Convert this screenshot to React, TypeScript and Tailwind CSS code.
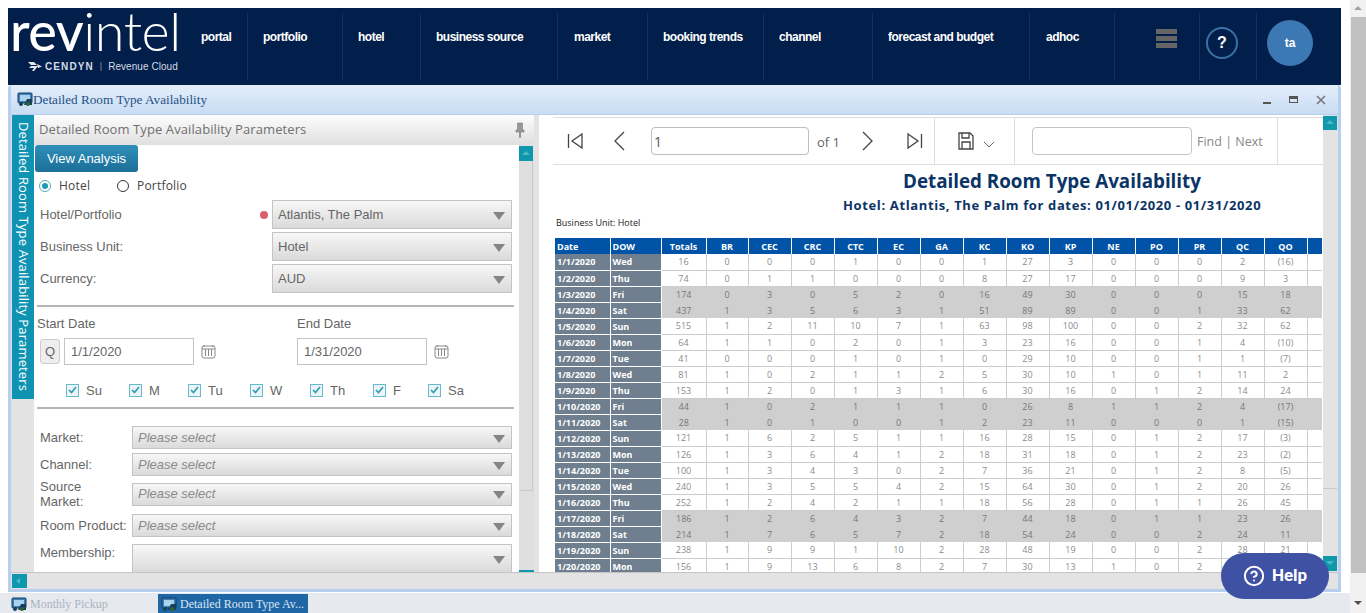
import { CircleHelp } from "lucide-react";

const navItems = [
  { label: "portal", width: "w-[55px]", pad: "pl-[8px]" },
  { label: "portfolio", width: "w-[95px]", pad: "pl-[15px]" },
  { label: "hotel", width: "w-[78px]", pad: "pl-[15px]" },
  { label: "business source", width: "w-[137px]", pad: "pl-[15px]" },
  { label: "market", width: "w-[90px]", pad: "pl-[16px]" },
  { label: "booking trends", width: "w-[116px]", pad: "pl-[15px]" },
  { label: "channel", width: "w-[109px]", pad: "pl-[15px]" },
  { label: "forecast and budget", width: "w-[157px]", pad: "pl-[15px]" },
  { label: "adhoc", width: "w-[85px]", pad: "pl-[16px]" },
];

const columns = ["BR", "CEC", "CRC", "CTC", "EC", "GA", "KC", "KO", "KP", "NE", "PO", "PR", "QC", "QO"];

const rows = [
  "1/1/2020 Wed 16 0 0 0 1 0 0 1 27 3 0 0 0 2 (16)",
  "1/2/2020 Thu 74 0 1 1 0 0 0 8 27 17 0 0 0 9 3",
  "1/3/2020 Fri 174 0 3 0 5 2 0 16 49 30 0 0 0 15 18",
  "1/4/2020 Sat 437 1 3 5 6 3 1 51 89 89 0 0 1 33 62",
  "1/5/2020 Sun 515 1 2 11 10 7 1 63 98 100 0 0 2 32 62",
  "1/6/2020 Mon 64 1 1 0 2 0 1 3 23 16 0 0 1 4 (10)",
  "1/7/2020 Tue 41 0 0 0 1 0 1 0 29 10 0 0 1 1 (7)",
  "1/8/2020 Wed 81 1 0 2 1 1 2 5 30 10 1 0 1 11 2",
  "1/9/2020 Thu 153 1 2 0 1 3 1 6 30 16 0 1 2 14 24",
  "1/10/2020 Fri 44 1 0 2 1 1 1 0 26 8 1 1 2 4 (17)",
  "1/11/2020 Sat 28 1 0 1 0 0 1 2 23 11 0 0 0 1 (15)",
  "1/12/2020 Sun 121 1 6 2 5 1 1 16 28 15 0 1 2 17 (3)",
  "1/13/2020 Mon 126 1 3 6 4 1 2 18 31 18 0 1 2 23 (2)",
  "1/14/2020 Tue 100 1 3 4 3 0 2 7 36 21 0 1 2 8 (5)",
  "1/15/2020 Wed 240 1 3 5 5 4 2 15 64 30 0 1 2 20 26",
  "1/16/2020 Thu 252 1 2 4 2 1 1 18 56 28 0 1 1 26 45",
  "1/17/2020 Fri 186 1 2 6 4 3 2 7 44 18 0 1 1 23 26",
  "1/18/2020 Sat 214 1 7 6 5 7 2 18 54 24 0 0 2 24 11",
  "1/19/2020 Sun 238 1 9 9 1 10 2 28 48 19 0 0 2 28 21",
  "1/20/2020 Mon 156 1 9 13 6 8 2 7 30 13 1 0 2 24 9",
].map((row) => row.split(" "));

const days = [
  { label: "Su", width: "w-[63px]" },
  { label: "M", width: "w-[59px]" },
  { label: "Tu", width: "w-[62px]" },
  { label: "W", width: "w-[60px]" },
  { label: "Th", width: "w-[63px]" },
  { label: "F", width: "w-[55px]" },
  { label: "Sa", width: "w-[50px]" },
];

const extraFilters = [
  { label: "Market:", text: "Please select", height: "h-[23px]", gap: "mt-[17px] items-center" },
  { label: "Channel:", text: "Please select", height: "h-[23px]", gap: "mt-[4px] items-center" },
  { label: "Source\nMarket:", text: "Please select", height: "h-[23px]", gap: "mt-[3px] items-center" },
  { label: "Room Product:", text: "Please select", height: "h-[23px]", gap: "mt-[5px] items-center" },
  { label: "Membership:", text: "", height: "h-[29px]", gap: "mt-[7px] items-start" },
];

function Caret() {
  return (
    <svg width="12" height="8" viewBox="0 0 12 8" className="mt-[2px] shrink-0">
      <polygon points="0,0 12,0 6,8" fill="#858585" />
    </svg>
  );
}

function Select({ text, italic, className }: { text: string; italic?: boolean; className: string }) {
  return (
    <div
      className={`flex items-center justify-between border border-[#c4c4c4] bg-gradient-to-b from-[#f7f7f7] to-[#dadada] pl-[5px] pr-[6px] text-[13px] ${italic ? "italic text-[#8a8a8a]" : "text-[#666]"} ${className}`}
    >
      <span>{text}</span>
      <Caret />
    </div>
  );
}

function WindowIcon({ className }: { className?: string }) {
  return (
    <svg width="16" height="14" viewBox="0 0 16 14" className={className}>
      <rect x="1" y="1" width="14" height="10" rx="1" fill="#3f7fb5" stroke="#123a63" />
      <rect x="3" y="3" width="10" height="6" fill="#a9d2ee" />
      <path d="M7 13 L10 7 L15 7 L15 13 Z" fill="#1c3e5e" />
      <circle cx="4" cy="12" r="2" fill="#1c3e5e" />
      <circle cx="11" cy="12" r="2" fill="#2a6a2e" />
    </svg>
  );
}

function CalendarIcon() {
  return (
    <svg width="15" height="15" viewBox="0 0 15 15" fill="none" stroke="#888">
      <rect x="1" y="2" width="13" height="12" rx="2" />
      <path d="M1 5H14M4.5 5V12M7.5 5V12M10.5 5V12M3 1V3M12 1V3" />
    </svg>
  );
}

function CheckBox() {
  return (
    <span className="flex h-[13px] w-[13px] shrink-0 items-center justify-center border border-[#62bccb] bg-[#edf3f7]">
      <svg width="9" height="8" viewBox="0 0 9 8" fill="none" stroke="#2a9db3" strokeWidth="1.6">
        <path d="M1 4 L3.5 6.5 L8 1" />
      </svg>
    </span>
  );
}

function TealButton({ className, dir }: { className: string; dir?: "up" | "down" | "left" }) {
  const points = dir === "up" ? "1,5 5,1 9,5" : dir === "down" ? "1,1 9,1 5,5" : "5,1 5,7 1,4";
  return (
    <div className={`flex items-center justify-center bg-[#0e97ad] ${className}`}>
      {dir && (
        <svg width="10" height="8" viewBox="0 0 10 8">
          <polygon points={points} fill="#4fb6c6" />
        </svg>
      )}
    </div>
  );
}

function ToolbarIcon({ d, width = 16 }: { d: string; width?: number }) {
  return (
    <svg width={width} height="20" viewBox={`0 0 ${width} 20`} fill="none" stroke="#444" strokeWidth="1.3">
      <path d={d} />
    </svg>
  );
}

function Navbar() {
  return (
    <nav className="ml-2 flex h-[77px] w-[1333px] shrink-0 bg-[#021e4a] text-white">
      <div className="w-[185px] shrink-0 pl-[2px]">
        <div className="flex h-[45px] items-end text-[54px] leading-[45px] tracking-[-0.5px] [font-family:'Lato',sans-serif]">
          <span className="font-medium">rev</span>
          <span className="font-light">intel</span>
        </div>
        <div className="mt-[6px] flex items-center pl-[18px] text-[#d5dbe5] [font-family:'Liberation_Sans',sans-serif]">
          <svg width="14" height="9" viewBox="0 0 14 9" fill="#e3e6ec">
            <path d="M0 0 H6 L9 3 H3 Z M3 4 H10 L6 9 H4 L6 6 H1 Z M9 2 L14 4.5 L10 6 Z" />
          </svg>
          <span className="ml-[3px] text-[10px] font-bold tracking-[1.1px]">CENDYN</span>
          <span className="ml-[6px] text-[9px] text-[#8d98aa]">|</span>
          <span className="ml-[6px] text-[10px] tracking-[0.05px]">Revenue Cloud</span>
        </div>
      </div>
      {navItems.map((item) => (
        <div key={item.label} className={`my-[5px] shrink-0 border-r border-[#14325e] pt-[10px] ${item.width} ${item.pad}`}>
          <span className="text-[12px] font-bold leading-[14px] tracking-[-0.5px] [font-family:'Liberation_Sans',sans-serif]">{item.label}</span>
        </div>
      ))}
      <div className="my-[5px] flex w-[85px] shrink-0 items-start justify-end border-r border-[#14325e] pr-[22px] pt-[16px]">
        <div className="flex flex-col gap-[2px]">
          <div className="h-[5px] w-[21px] bg-[#666]" />
          <div className="h-[5px] w-[21px] bg-[#666]" />
          <div className="h-[5px] w-[21px] bg-[#666]" />
        </div>
      </div>
      <div className="my-[5px] w-[57px] shrink-0 border-r border-[#14325e] pl-[6px] pt-[14px]">
        <div className="flex h-[32px] w-[32px] items-center justify-center rounded-full border-2 border-[#3b72a6] text-[16px] font-bold [font-family:'Liberation_Sans',sans-serif]">
          ?
        </div>
      </div>
      <div className="ml-[10px] mt-[12px] flex h-[46px] w-[46px] items-center justify-center rounded-full bg-[#3b78b4] text-[12px] font-bold [font-family:'Liberation_Sans',sans-serif]">
        ta
      </div>
    </nav>
  );
}

function ParametersPanel() {
  return (
    <div className="flex w-[500px] shrink-0 flex-col">
      <div className="flex h-[30px] shrink-0 items-center justify-between bg-gradient-to-b from-[#fdfdfd] to-[#dfdfdf] pl-[5px] pr-[8px] text-[13px] tracking-[0.09px] text-[#707070] [font-family:'Open_Sans',sans-serif]">
        <span>Detailed Room Type Availability Parameters</span>
        <svg width="12" height="16" viewBox="0 0 12 16" fill="#9a9a9a" stroke="#777" strokeWidth="0.6">
          <path d="M3.5 1H8.5V8H10V10H6.5V15.5H5.5V10H2V8H3.5Z" />
        </svg>
      </div>
      <div className="flex h-[427px] bg-white">
        <div className="w-[485px] shrink-0 overflow-hidden text-[13px] text-[#666] [font-family:'Liberation_Sans',sans-serif]">
          <button className="ml-[1px] block h-[27px] w-[103px] rounded-[3px] bg-gradient-to-b from-[#2f8fb9] to-[#1c6f98] pt-[1px] text-[13px] text-white">
            View Analysis
          </button>
          <div className="ml-[5px] mt-[6px] flex h-[16px] items-center text-[12px] tracking-[0.2px] text-[#444] [font-family:'Open_Sans',sans-serif]">
            <span className="flex h-[12px] w-[12px] items-center justify-center rounded-full border border-[#55a9bd]">
              <span className="h-[6px] w-[6px] rounded-full bg-[#1f9ab5]" />
            </span>
            <span className="ml-[8px] w-[58px]">Hotel</span>
            <span className="h-[12px] w-[12px] rounded-full border border-[#333]" />
            <span className="ml-[8px]">Portfolio</span>
          </div>
          <div className="mt-[6px] flex flex-col gap-[3px] pl-[6px] pr-[6px]">
            <div className="flex h-[29px] items-center">
              <span className="w-[220px]">Hotel/Portfolio</span>
              <span className="h-[8px] w-[8px] rounded-full bg-[#d8616f]" />
              <Select text="Atlantis, The Palm" className="ml-[4px] h-[29px] w-[240px]" />
            </div>
            <div className="flex h-[29px] items-center">
              <span className="w-[232px]">Business Unit:</span>
              <Select text="Hotel" className="h-[29px] w-[240px]" />
            </div>
            <div className="flex h-[29px] items-center">
              <span className="w-[232px]">Currency:</span>
              <Select text="AUD" className="h-[29px] w-[240px]" />
            </div>
          </div>
          <div className="ml-[3px] mt-[12px] h-[2px] w-[477px] bg-[#b5b5b5]" />
          <div className="ml-[3px] mt-[9px] flex text-[13px] leading-[16px]">
            <span className="w-[260px]">Start Date</span>
            <span>End Date</span>
          </div>
          <div className="mt-[6px] flex items-center">
            <div className="ml-[6px] flex h-[25px] w-[20px] items-center justify-center rounded-[3px] border border-[#ccc] bg-[#eee]">Q</div>
            <div className="ml-[4px] flex h-[27px] w-[130px] items-center border border-[#c4c4c4] pl-[6px]">1/1/2020</div>
            <div className="ml-[7px] w-[96px]">
              <CalendarIcon />
            </div>
            <div className="flex h-[27px] w-[130px] items-center border border-[#c4c4c4] pl-[6px]">1/31/2020</div>
            <div className="ml-[7px]">
              <CalendarIcon />
            </div>
          </div>
          <div className="ml-[32px] mt-[17px] flex h-[16px] items-center">
            {days.map((day) => (
              <div key={day.label} className={`flex items-center ${day.width}`}>
                <CheckBox />
                <span className="ml-[7px] mt-[2px] text-[13px]">{day.label}</span>
              </div>
            ))}
          </div>
          <div className="ml-[3px] mt-[9px] h-[2px] w-[477px] bg-[#b5b5b5]" />
          {extraFilters.map((filter) => (
            <div key={filter.label} className={`flex pl-[6px] pr-[6px] ${filter.gap}`}>
              <span className={`w-[92px] shrink-0 whitespace-pre-line leading-[15px] ${filter.text ? "" : "pt-[1px]"}`}>{filter.label}</span>
              <Select text={filter.text} italic className={`w-[380px] ${filter.height}`} />
            </div>
          ))}
        </div>
        <div className="flex w-[15px] shrink-0 flex-col bg-[#dfdfdf]">
          <TealButton dir="up" className="mt-[1px] h-[15px] w-[14px] shrink-0" />
          <div className="h-[330px] w-[14px] shrink-0 border-b border-r border-[#c9c9c9]" />
          <div className="flex-1" />
          <TealButton className="h-[2px] shrink-0" />
        </div>
      </div>
    </div>
  );
}

function ReportTable() {
  return (
    <table className="ml-[2px] w-[767px] table-fixed border-collapse text-[9px] leading-[15px] [font-family:'Open_Sans',sans-serif]">
      <colgroup>
        <col className="w-[55px]" />
        <col className="w-[51px]" />
        <col className="w-[45px]" />
        <col className="w-[42px]" />
        {columns.slice(1).map((column) => (
          <col key={column} className="w-[43px]" />
        ))}
        <col />
      </colgroup>
      <thead>
        <tr className="h-[16px] bg-[#0053a6] font-bold text-white">
          <th className="border-r border-white pl-[2px] text-left">Date</th>
          <th className="border-r border-white pl-[2px] text-left">DOW</th>
          <th className="border-r border-white text-center">Totals</th>
          {columns.map((column) => (
            <th key={column} className="border-r border-white text-center">
              {column}
            </th>
          ))}
          <th />
        </tr>
      </thead>
      <tbody>
        {rows.map((row) => {
          const weekend = row[1] === "Fri" || row[1] === "Sat";
          return (
            <tr key={row[0]} className={`h-[16px] ${weekend ? "bg-[#cfcfcf] text-[#777]" : "bg-white text-[#8c8c8c]"}`}>
              <td className="border-b border-r border-white bg-[#6f7f8f] pl-[2px] font-bold text-white">{row[0]}</td>
              <td className="border-b border-r border-white bg-[#6f7f8f] pl-[2px] font-bold text-white">{row[1]}</td>
              {row.slice(2).map((cell, index) => (
                <td key={index} className={`text-center ${weekend ? "" : "border-b border-r border-[#cdcdcd]"}`}>
                  {cell}
                </td>
              ))}
              <td className={weekend ? "" : "border-b border-[#cdcdcd]"} />
            </tr>
          );
        })}
      </tbody>
    </table>
  );
}

function ReportPanel() {
  return (
    <div className="flex w-[798px] shrink-0">
      <div className="h-[457px] w-[784px] shrink-0 overflow-hidden bg-white pl-[14px] pt-[2px]">
        <div className="flex h-[48px] items-center border-b border-t border-[#dedede] text-[14px] text-[#666] [font-family:'Open_Sans',sans-serif]">
          <div className="flex h-full w-[382px] shrink-0 items-center border-r border-[#dedede]">
            <span className="ml-[14px] flex">
              <ToolbarIcon d="M1.5 3V17M15 3V17L5 10Z" />
            </span>
            <span className="ml-[30px] flex">
              <ToolbarIcon width={12} d="M11 1L2 10L11 19" />
            </span>
            <div className="ml-[26px] flex h-[28px] w-[158px] items-center rounded-[4px] border border-[#bdbdbd] pl-[2px] text-[#555]">1</div>
            <span className="ml-[8px] mt-[3px] text-[13px]">of 1</span>
            <span className="ml-[22px] flex">
              <ToolbarIcon width={12} d="M1 1L10 10L1 19" />
            </span>
            <span className="ml-[33px] flex">
              <ToolbarIcon d="M1 3V17L11 10ZM14.5 3V17" />
            </span>
          </div>
          <div className="flex h-full w-[80px] shrink-0 items-center border-r border-[#dedede] pl-[23px]">
            <ToolbarIcon d="M1 2H12L15 5V18H1ZM4 2V7H11V2M4 18V11H12V18" width={16} />
            <svg width="12" height="8" viewBox="0 0 12 8" fill="none" stroke="#666" className="ml-[9px] mt-[7px]">
              <path d="M1 1L6 6L11 1" />
            </svg>
          </div>
          <div className="flex h-full w-[263px] shrink-0 items-center border-r border-[#dedede] pl-[17px]">
            <div className="h-[28px] w-[160px] rounded-[4px] border border-[#c4c4c4]" />
            <span className="ml-[5px] mt-[3px] text-[12.5px] text-[#888]">Find | Next</span>
          </div>
        </div>
        <div className="whitespace-nowrap pl-[350px] pt-[2px] text-[18.8px] font-bold leading-[28px] text-[#0b3466] [font-family:'Open_Sans',sans-serif]">
          Detailed Room Type Availability
        </div>
        <div className="whitespace-nowrap pl-[290px] pt-[1px] text-[13px] font-bold leading-[18px] tracking-[0.63px] text-[#0b3466] [font-family:'Open_Sans',sans-serif]">
          Hotel: Atlantis, The Palm for dates: 01/01/2020 - 01/31/2020
        </div>
        <div className="pl-[3px] pt-[2px] text-[9px] leading-[14px] text-[#222] [font-family:'Open_Sans',sans-serif]">Business Unit: Hotel</div>
        <div className="mt-[8px]">
          <ReportTable />
        </div>
      </div>
      <div className="flex h-[457px] w-[14px] shrink-0 flex-col bg-[#e3e3e3]">
        <TealButton dir="up" className="mt-[1px] h-[14px] shrink-0" />
        <div className="h-[359px] shrink-0 border-b border-[#c9c9c9]" />
        <div className="flex-1" />
        <TealButton dir="down" className="mb-[1px] h-[15px] shrink-0" />
      </div>
    </div>
  );
}

function ReportWindow() {
  return (
    <section className="ml-2 flex h-[507px] w-[1333px] shrink-0 flex-col rounded-t-[4px] border-x-[3px] border-b-[3px] border-[#b7cfee] bg-[#e3e3e3]">
      <div className="flex h-[30px] shrink-0 items-center justify-between border-b border-[#b7cfee] bg-gradient-to-b from-[#e4eefb] to-[#c8dcf3] pl-[6px] pr-[12px] text-[13.2px] text-[#1f5186] [font-family:'Liberation_Serif',serif]">
        <div className="flex items-center">
          <WindowIcon />
          <span>Detailed Room Type Availability</span>
        </div>
        <div className="flex items-center gap-[18px]">
          <div className="mt-[6px] h-[2px] w-[8px] bg-[#555]" />
          <div className="h-[7px] w-[9px] border border-t-[3px] border-[#555]" />
          <svg width="10" height="10" viewBox="0 0 10 10" fill="none" stroke="#777" strokeWidth="1.6">
            <path d="M1 1L9 9M9 1L1 9" />
          </svg>
        </div>
      </div>
      <div className="flex h-[457px] shrink-0 pl-[1px]">
        <div className="flex w-[22px] shrink-0 flex-col">
          <div className="flex h-[284px] items-start justify-center bg-[#0e93b3] pt-[7px] text-[13px] tracking-[0.13px] text-white [font-family:'Open_Sans',sans-serif]">
            <span className="whitespace-nowrap [writing-mode:vertical-rl]">Detailed Room Type Availability Parameters</span>
          </div>
        </div>
        <ParametersPanel />
        <div className="w-[5px] shrink-0" />
        <ReportPanel />
      </div>
      <div className="flex-1 border-t border-[#c4c4c4] pl-[1px] pt-[1px]">
        <TealButton dir="left" className="h-[14px] w-[15px]" />
      </div>
    </section>
  );
}

function TaskBar() {
  return (
    <div className="mt-[1px] flex h-[20px] w-[1350px] shrink-0 items-end bg-[#e6eaee] pl-[11px] text-[12px] [font-family:'Liberation_Serif',serif]">
      <div className="flex h-[18px] w-[147px] items-center text-[#a9b4c0]">
        <WindowIcon />
        <span className="ml-[3px]">Monthly Pickup</span>
      </div>
      <div className="flex h-[19px] w-[150px] items-center bg-[#1f66a6] pl-[3px] text-[#dbe7f2]">
        <WindowIcon />
        <span className="ml-[3px]">Detailed Room Type Av...</span>
      </div>
    </div>
  );
}

function PageScrollbar() {
  return (
    <div className="flex h-[613px] w-[16px] shrink-0 flex-col items-center bg-[#f1f1f1]">
      <svg width="8" height="17" viewBox="0 0 8 17">
        <polygon points="4,6 8,10 0,10" fill="#a3a3a3" />
      </svg>
      <div className="h-[556px] w-[15px] bg-[#c1c1c1]" />
      <div className="flex flex-1 items-end pb-[7px]">
        <svg width="8" height="5" viewBox="0 0 8 5">
          <polygon points="0,0 8,0 4,4" fill="#505050" />
        </svg>
      </div>
    </div>
  );
}

export default function App() {
  return (
    <div className="relative flex h-[613px] w-[1366px] overflow-hidden bg-white">
      <div className="flex w-[1350px] shrink-0 flex-col">
        <div className="h-2 shrink-0" />
        <Navbar />
        <ReportWindow />
        <TaskBar />
      </div>
      <PageScrollbar />
      <button className="absolute left-[1221px] top-[553px] flex h-[46px] w-[108px] items-center justify-center gap-[7px] rounded-full bg-[#3f51a3] text-[17px] font-bold text-white [font-family:'Roboto',sans-serif]">
        <CircleHelp size={22} strokeWidth={2.2} />
        Help
      </button>
    </div>
  );
}
